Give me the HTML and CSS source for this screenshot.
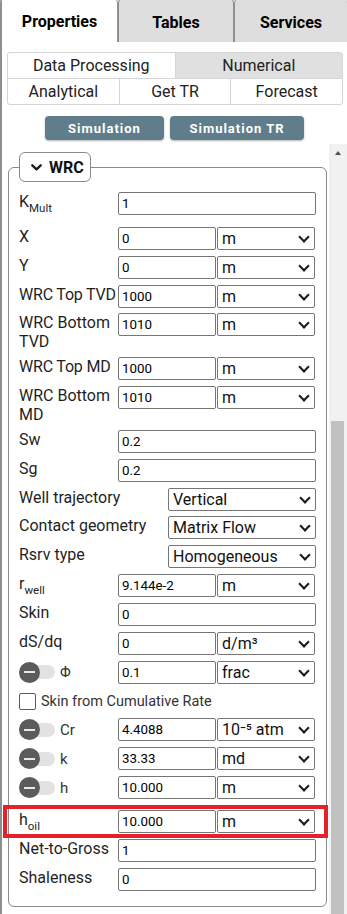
FILE: index.html
```html
<!DOCTYPE html>
<html lang="en">
<head>
  <meta charset="UTF-8" />
  <meta name="viewport" content="width=device-width, initial-scale=1.0" />
  <title>WRC Properties</title>
  <link rel="stylesheet" href="styles.css">
</head>
<body>
  <div class="panel">
    <div class="tabs">
      <div class="tab active">Properties</div>
      <div class="tab">Tables</div>
      <div class="tab last">Services</div>
    </div>

    <div class="subtabs">
      <div class="subtab-row">
        <div class="subtab">Data Processing</div>
        <div class="subtab selected">Numerical</div>
      </div>
      <div class="subtab-row">
        <div class="subtab">Analytical</div>
        <div class="subtab">Get TR</div>
        <div class="subtab">Forecast</div>
      </div>
    </div>

    <div class="actions">
      <button class="btn-sim sim">Simulation</button>
      <button class="btn-sim sim-tr">Simulation TR</button>
    </div>

    <div class="scroll-area">
      <div class="scroll-content">
        <fieldset class="group">
          <legend>
            <button class="group-toggle">
              <svg width="11" height="7" viewBox="0 0 11 7"><polyline points="1.3,1.3 5.5,5.3 9.7,1.3" fill="none" stroke="#1a1a1a" stroke-width="2.3" stroke-linecap="round" stroke-linejoin="round"/></svg>
              WRC
            </button>
          </legend>

          <div class="rows">
            <div class="row tall">
              <div class="label">K<sub>Mult</sub></div>
              <input class="input full" value="1">
            </div>
            <div class="row">
              <div class="label">X</div>
              <input class="input" value="0">
              <div class="select"><select><option>m</option></select></div>
            </div>
            <div class="row">
              <div class="label">Y</div>
              <input class="input" value="0">
              <div class="select"><select><option>m</option></select></div>
            </div>
            <div class="row">
              <div class="label nowrap">WRC Top TVD</div>
              <input class="input" value="1000">
              <div class="select"><select><option>m</option></select></div>
            </div>
            <div class="row">
              <div class="label">WRC Bottom TVD</div>
              <input class="input" value="1010">
              <div class="select"><select><option>m</option></select></div>
            </div>
            <div class="row">
              <div class="label nowrap">WRC Top MD</div>
              <input class="input" value="1000">
              <div class="select"><select><option>m</option></select></div>
            </div>
            <div class="row">
              <div class="label">WRC Bottom MD</div>
              <input class="input" value="1010">
              <div class="select"><select><option>m</option></select></div>
            </div>
            <div class="row">
              <div class="label">Sw</div>
              <input class="input full" value="0.2">
            </div>
            <div class="row">
              <div class="label">Sg</div>
              <input class="input full" value="0.2">
            </div>
            <div class="row wide">
              <div class="label">Well trajectory</div>
              <div class="select"><select><option>Vertical</option></select></div>
            </div>
            <div class="row wide">
              <div class="label">Contact geometry</div>
              <div class="select"><select><option>Matrix Flow</option></select></div>
            </div>
            <div class="row wide">
              <div class="label">Rsrv type</div>
              <div class="select"><select><option>Homogeneous</option></select></div>
            </div>
            <div class="row">
              <div class="label">r<sub>well</sub></div>
              <input class="input" value="9.144e-2">
              <div class="select"><select><option>m</option></select></div>
            </div>
            <div class="row">
              <div class="label">Skin</div>
              <input class="input full" value="0">
            </div>
            <div class="row">
              <div class="label">dS/dq</div>
              <input class="input" value="0">
              <div class="select"><select><option>d/m³</option></select></div>
            </div>
            <div class="row">
              <div class="label switch"><span class="toggle"><span class="knob"></span></span>Φ</div>
              <input class="input" value="0.1">
              <div class="select"><select><option>frac</option></select></div>
            </div>
            <div class="row">
              <label class="check"><span class="box"></span>Skin from Cumulative Rate</label>
            </div>
            <div class="row">
              <div class="label switch"><span class="toggle"><span class="knob"></span></span>Cr</div>
              <input class="input" value="4.4088">
              <div class="select"><select><option>10⁻⁵ atm</option></select></div>
            </div>
            <div class="row">
              <div class="label switch"><span class="toggle"><span class="knob"></span></span>k</div>
              <input class="input" value="33.33">
              <div class="select"><select><option>md</option></select></div>
            </div>
            <div class="row">
              <div class="label switch"><span class="toggle"><span class="knob"></span></span>h</div>
              <input class="input" value="10.000">
              <div class="select"><select><option>m</option></select></div>
            </div>
            <div class="row marked">
              <div class="label">h<sub>oil</sub></div>
              <input class="input" value="10.000">
              <div class="select"><select><option>m</option></select></div>
              <div class="marker"></div>
            </div>
            <div class="row">
              <div class="label">Net-to-Gross</div>
              <input class="input full" value="1">
            </div>
            <div class="row">
              <div class="label">Shaleness</div>
              <input class="input full" value="0">
            </div>
          </div>
        </fieldset>
      </div>

      <div class="scrollbar">
        <div class="scroll-up"><span class="arrow"></span></div>
        <div class="scroll-thumb"></div>
      </div>
    </div>
  </div>
</body>
</html>
```

FILE: styles.css
```css
* {
  box-sizing: border-box;
}

body {
  margin: 0;
  font-family: Roboto, "Liberation Sans", Arial, sans-serif;
  color: #1f1f1f;
  background: #fff;
  overflow: hidden;
}

.panel {
  display: flex;
  flex-direction: column;
  height: calc(100vh + 7px);
  margin-top: -7px;
  border-left: 2px solid #8f8f8f;
  border-top: 1px solid #8f8f8f;
  border-top-left-radius: 10px;
}

/* top tabs */
.tabs {
  display: grid;
  grid-template-columns: 116px 116px 1fr;
  height: 48px;
  flex: none;
}

.tab {
  display: flex;
  align-items: center;
  justify-content: center;
  padding-top: 7px;
  font-size: 16px;
  font-weight: 700;
  color: #000;
  background: #dedede;
  border: 1px solid #8f8f8f;
  border-bottom: none;
  border-radius: 10px 10px 0 0;
}

.tab.active {
  background: #fff;
  border-left: none;
  border-top: none;
  border-top-left-radius: 0;
}

.tab.last {
  border-right: none;
}

/* sub tabs */
.subtabs {
  flex: none;
  margin: 10px 4px 0 5px;
  border: 1px solid #d5d5d5;
  border-radius: 3px;
}

.subtab-row {
  display: flex;
}

.subtab-row + .subtab-row {
  border-top: 1px solid #d5d5d5;
}

.subtab {
  flex: 1;
  height: 25px;
  display: flex;
  align-items: center;
  justify-content: center;
  font-size: 16px;
  color: #222;
}

.subtab + .subtab {
  border-left: 1px solid #d5d5d5;
}

.subtab.selected {
  background: #e0e0e0;
}

.actions {
  flex: none;
  display: flex;
  justify-content: center;
  gap: 6px;
  margin: 11px 0 4px;
}

.btn-sim {
  height: 24px;
  padding: 0;
  border: none;
  border-radius: 4px;
  background: #607d8b;
  color: #fff;
  font-family: inherit;
  font-size: 13px;
  font-weight: 700;
  letter-spacing: 1px;
  box-shadow: 0 1px 2px rgba(0, 0, 0, 0.3);
}

.btn-sim.sim {
  width: 119px;
}

.btn-sim.sim-tr {
  width: 134px;
}

/* scrolling part */
.scroll-area {
  flex: 1;
  display: flex;
  min-height: 0;
  overflow: hidden;
}

.scroll-content {
  flex: 1;
  padding: 8px 2px 0 6px;
}

.scrollbar {
  flex: none;
  width: 18px;
  display: flex;
  flex-direction: column;
  background: #f1f1f1;
}

.scroll-up {
  height: 17px;
  display: flex;
  align-items: center;
  justify-content: center;
}

.arrow {
  border-left: 3.5px solid transparent;
  border-right: 3.5px solid transparent;
  border-bottom: 4px solid #505050;
}

.scroll-thumb {
  flex: 1;
  margin: 260px 3px 0 2px;
  background: #c1c1c1;
}

/* WRC group */
.group {
  margin: 0;
  min-width: 0;
  padding: 10px 10px 15px;
  border: 1px solid #8a8a8a;
  border-radius: 6px;
}

.group legend {
  padding: 0;
}

.group-toggle {
  display: flex;
  align-items: center;
  gap: 7px;
  height: 30px;
  padding: 0 6px 0 11px;
  border: 1px solid #8a8a8a;
  border-radius: 6px;
  background: #fff;
  font-family: inherit;
  font-size: 16px;
  font-weight: 700;
  color: #111;
}

.rows {
  display: flex;
  flex-direction: column;
  gap: 5.85px;
}

.row {
  display: flex;
  align-items: flex-start;
  min-height: 23px;
}

.row.tall {
  min-height: 29px;
}

.row.marked {
  position: relative;
  margin-top: 5px;
}

.label {
  flex: none;
  width: 99px;
  font-size: 16px;
  color: #1f1f1f;
}

.label.nowrap {
  white-space: nowrap;
  letter-spacing: -0.2px;
}

.label sub {
  font-size: 11.5px;
  line-height: 0;
  vertical-align: -5px;
}

.row.wide .label {
  width: 149px;
}

.input {
  flex: none;
  width: 98px;
  height: 23px;
  margin: 0;
  padding: 0 3px;
  border: 1px solid #767676;
  border-radius: 2px;
  font-family: inherit;
  font-size: 13.33px;
  color: #000;
}

.input.full {
  flex: 1;
  width: auto;
}

.select {
  position: relative;
  flex: none;
  width: 98px;
  margin-left: 1px;
}

.row.wide .select {
  flex: 1;
  margin-left: 0;
}

.select select {
  display: block;
  width: 100%;
  height: 23px;
  margin: 0;
  padding: 0 4px;
  border: 1px solid #767676;
  border-radius: 2px;
  background: #fff;
  font-family: inherit;
  font-size: 16px;
  color: #111;
  appearance: none;
  -webkit-appearance: none;
}

.select::after {
  content: "";
  position: absolute;
  right: 7px;
  top: 6px;
  width: 6px;
  height: 6px;
  border-right: 2.5px solid #1a1a1a;
  border-bottom: 2.5px solid #1a1a1a;
  transform: rotate(45deg);
  pointer-events: none;
}

/* on/off switches */
.label.switch {
  display: flex;
  align-items: center;
  gap: 5px;
  height: 23px;
  font-size: 15px;
  color: #333;
}

.toggle {
  display: flex;
  align-items: center;
  width: 36px;
  height: 14px;
  border-radius: 7px;
  background: #e2e2e2;
}

.knob {
  flex: none;
  display: flex;
  align-items: center;
  justify-content: center;
  width: 21px;
  height: 21px;
  border-radius: 50%;
  background: #5b5b5b;
}

.knob::after {
  content: "";
  width: 11px;
  height: 2px;
  background: #e8e8e8;
}

.check {
  display: flex;
  align-items: center;
  gap: 5px;
  height: 23px;
  font-size: 14.5px;
  color: #333;
}

.box {
  width: 17px;
  height: 17px;
  border: 1.5px solid #5c5c5c;
  border-radius: 2px;
}

.marker {
  position: absolute;
  left: -16px;
  right: -12px;
  top: -5px;
  bottom: -5px;
  border: 4px solid #e5222a;
  pointer-events: none;
}
```
